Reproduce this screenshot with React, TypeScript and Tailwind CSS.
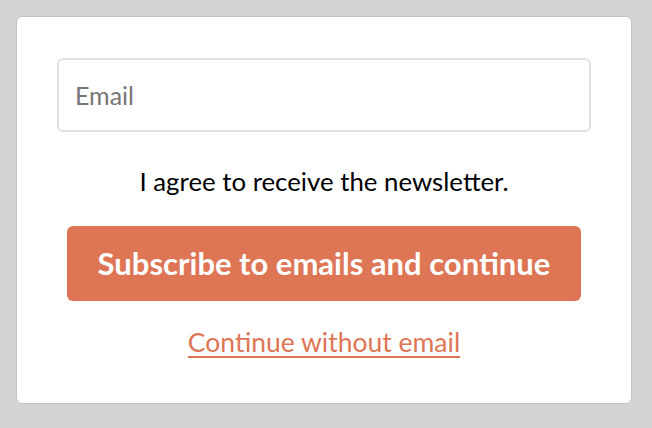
export default function App() {
  return (
    <div className="min-h-screen w-full bg-[#d4d4d4] pl-4 pr-5 pt-4" style={{ fontFamily: "Lato, 'Noto Sans', sans-serif" }}>
      <div className="flex h-[388px] flex-col rounded-[6px] border border-[#c4c4c4] bg-white px-10 pt-[41px]">
        <input
          type="email"
          placeholder="Email"
          className="h-[74px] w-full rounded-[6px] border-2 border-[#e0e0e0] px-[16px] text-[25px] text-[#333] placeholder:text-[#767676] outline-none"
        />
        <p className="mt-[32px] text-center text-[25.8px] leading-[34px] text-black">
          I agree to receive the newsletter.
        </p>
        <button className="mx-[10px] mt-[28px] h-[75px] rounded-[6px] bg-[#de7555] text-[31px] font-bold text-white">
          Subscribe to emails and continue
        </button>
        <a
          href="#"
          className="mt-[23px] self-center text-[26.5px] leading-[36px] text-[#de7555] underline underline-offset-[4px]"
        >
          Continue without email
        </a>
      </div>
    </div>
  )
}
